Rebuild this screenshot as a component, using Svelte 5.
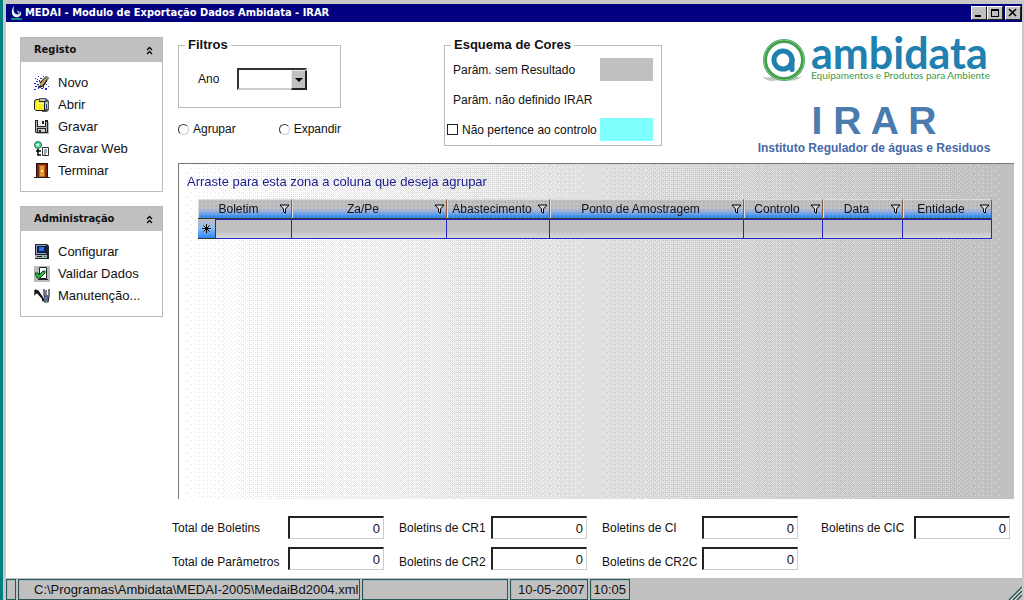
<script>
	import { onMount } from 'svelte';

	let canvas;
	let ano = '';
	let vista = '';
	let foraControlo = false;

	let menus = [
		{
			title: 'Registo',
			open: true,
			items: [
				{ icon: 'novo', label: 'Novo' },
				{ icon: 'abrir', label: 'Abrir' },
				{ icon: 'gravar', label: 'Gravar' },
				{ icon: 'web', label: 'Gravar Web' },
				{ icon: 'terminar', label: 'Terminar' }
			]
		},
		{
			title: 'Administração',
			open: true,
			items: [
				{ icon: 'configurar', label: 'Configurar' },
				{ icon: 'validar', label: 'Validar Dados' },
				{ icon: 'manutencao', label: 'Manutenção...' }
			]
		}
	];

	const columns = [
		{ name: 'Boletim', width: 77 },
		{ name: 'Za/Pe', width: 155 },
		{ name: 'Abastecimento', width: 103 },
		{ name: 'Ponto de Amostragem', width: 194 },
		{ name: 'Controlo', width: 79 },
		{ name: 'Data', width: 80 },
		{ name: 'Entidade', width: 89 }
	];
	const selector = 17;
	const total = columns.reduce((sum, c) => sum + c.width, selector);

	const totals = [
		{ id: 'boletins', label: 'Total de Boletins' },
		{ id: 'cr1', label: 'Boletins de CR1' },
		{ id: 'ci', label: 'Boletins de CI' },
		{ id: 'cic', label: 'Boletins de CIC' },
		{ id: 'parametros', label: 'Total de Parâmetros' },
		{ id: 'cr2', label: 'Boletins de CR2' },
		{ id: 'cr2c', label: 'Boletins de CR2C' }
	];

	// 8x8 ordered dither matrix
	const bayer = (x, y) => {
		let v = 0;
		for (let i = 0; i < 3; i++) {
			const bx = (x >> i) & 1;
			const by = (y >> i) & 1;
			v = v * 4 + ((bx ^ by) * 2 + by);
		}
		return (v + 0.5) / 64;
	};

	function paint() {
		const w = (canvas.width = canvas.clientWidth);
		const h = (canvas.height = canvas.clientHeight);
		if (!w || !h) return;
		const ctx = canvas.getContext('2d');
		const img = ctx.createImageData(w, h);
		const levels = [255, 224, 192];
		for (let y = 0; y < h; y++) {
			for (let x = 0; x < w; x++) {
				const t = (x / w) * 2;
				const base = Math.min(1, Math.floor(t));
				const c = levels[t - base > bayer(x, y) ? base + 1 : base];
				const p = (y * w + x) * 4;
				img.data[p] = img.data[p + 1] = img.data[p + 2] = c;
				img.data[p + 3] = 255;
			}
		}
		ctx.putImageData(img, 0, 0);
	}

	onMount(paint);
</script>

<svelte:window on:resize={paint} />

<div class="window">
	<header class="titlebar">
		<svg class="app-icon" width="14" height="16" viewBox="0 0 14 16">
			<path d="M4 1C1 4 1 11 5 12c4 1 7-1 6-6-1 3-3 4-5 3C4 8 3 5 4 1z" fill="#e4f0f0" />
			<path d="M7 5l3 2-2 2z" fill="#9bc" />
			<path d="M1 14h11" stroke="#0a9080" stroke-width="2" />
		</svg>
		<h1>MEDAI - Modulo de Exportação Dados Ambidata - IRAR</h1>
		<div class="controls">
			<button aria-label="Minimizar"><svg width="10" height="10"><path d="M1 8h6" stroke="#000" stroke-width="2" /></svg></button>
			<button aria-label="Maximizar"><svg width="10" height="10"><path d="M1 1.5h8M1.5 1v8M8.5 1v8M1 8.5h8M1 2.5h8" stroke="#000" /></svg></button>
			<button class="close" aria-label="Fechar"><svg width="10" height="10"><path d="M1 1l7 7M8 1l-7 7" stroke="#000" stroke-width="1.6" /></svg></button>
		</div>
	</header>

	<div class="body">
		<nav>
			{#each menus as menu}
				<section class="menu">
					<button class="menu-head" aria-expanded={menu.open} on:click={() => (menu.open = !menu.open)}>
						{menu.title}
						<svg class:closed={!menu.open} width="7" height="9" viewBox="0 0 7 9">
							<path d="M1 4l2.5-2.5L6 4M1 8l2.5-2.5L6 8" fill="none" stroke="#000" stroke-width="1.3" />
						</svg>
					</button>
					{#if menu.open}
						<ul>
							{#each menu.items as item}
								<li>
									<button class="menu-item">
										<svg width="16" height="16" viewBox="0 0 16 16">
											{#if item.icon === 'novo'}
												<path d="M1 3h1v1H1zM4 1h1v1H4zM6 3h2v1H6zM2 6h2v1H2zM5 5h1v2H5zM0 8h2v1H0zM3 9h2v1H3zM1 11h2v1H1zM4 12h1v2H4zM0 14h2v1H0zM7 13h2v1H7zM9 11h1v2H9zM11 13h2v2h-2zM12 9h1v1h-1zM14 11h1v1h-1zM9 1h1v1H9zM3 4h1v1H3z" fill="#2424d0" />
												<path d="M4 12l2-5 6-6 3 2-5 8-4 2z" fill="#222" />
												<path d="M6 9l5-6 2 1-5 7z" fill="#c8a060" />
												<path d="M11 2l2-1 2 2-1 2-2-1z" fill="#888" />
												<path d="M5 8l2 2-2 1z" fill="#fff" />
											{:else if item.icon === 'abrir'}
												<path d="M5 1h7l3 3v9l-2 2H8z" fill="#555" />
												<path d="M6 2h5v3h3v7H7z" fill="#b8c4d0" />
												<path d="M0 4l2-2h3l1 2h5v10H2l-2-2z" fill="#222" />
												<path d="M1 5l1-2h3v2h5v8H2l-1-1z" fill="#f4ee20" />
												<path d="M3 6h7v1H4v6H3z" fill="#fffba0" />
												<path d="M12 7h1v5h-1z" fill="#234a80" />
											{:else if item.icon === 'gravar'}
												<path d="M3 3h12v12H3z" fill="#bbb" />
												<path d="M1 1h13v13H2l-1-1z" fill="#222" />
												<path d="M2 2h1v11H2zM12 3h1v10h-1zM3 8h9v1H3z" fill="#b4b4b4" />
												<path d="M4 1h7v6H4z" fill="#f0f0f0" />
												<path d="M8 2h2v3H8z" fill="#222" />
												<path d="M4 10h7v3H4z" fill="#ccc" />
												<path d="M5 11h2v2H5z" fill="#222" />
											{:else if item.icon === 'web'}
												<circle cx="4" cy="4" r="3.5" fill="#58d898" stroke="#147050" />
												<path d="M2 3h3v2H3z" fill="#d8fff0" />
												<path d="M4 8v6h3M2 10h5" fill="none" stroke="#000" stroke-width="1.5" />
												<path d="M8.5 6.5h6v8h-6z" fill="#fff" stroke="#333" />
												<path d="M10 9h3M10 11h3M10 13h2" stroke="#357" />
											{:else if item.icon === 'terminar'}
												<path d="M2 0h12v15H2z" fill="#2c0c08" />
												<path d="M3 1h10v13H3z" fill="#7c2810" />
												<path d="M5 2h6v12H5z" fill="#b86818" />
												<path d="M6 3h4v10H6z" fill="#e09838" />
												<path d="M7 7h2v2H7z" fill="#fff490" />
												<path d="M0 14h16v1H0z" fill="#222" />
											{:else if item.icon === 'configurar'}
												<path d="M1 0h12l2 2v13H1z" fill="#1c2430" />
												<path d="M2 1h10v9H2z" fill="#98a4b0" />
												<path d="M3 2h9v7H3z" fill="#0c1c58" />
												<path d="M5 3h5v4H5z" fill="#3070f0" />
												<path d="M1 11h12v3H1z" fill="#aab2b8" />
												<path d="M3 12h5v1H3z" fill="#222" />
												<path d="M10 12h2v1h-2z" fill="#20a040" />
											{:else if item.icon === 'validar'}
												<path d="M0 0h16v16H0z" fill="#bbb" />
												<path d="M5.5 1.5h7v11h-7z" fill="#fff" stroke="#222" />
												<path d="M4 13h10v1H4z" fill="#222" />
												<path d="M1 7h3l1 2 4-4h2v2l-5 5H3z" fill="#30b848" stroke="#0b4818" />
											{:else}
												<path d="M1 2l3 1 6 9M1 2v4l3-3M2 3l7 8" fill="none" stroke="#111" stroke-width="1.4" />
												<path d="M10 1v6l1 3v4h3l1-6V1M12 2v7" fill="none" stroke="#223" stroke-width="1.2" />
												<path d="M12 7h2v6h-2z" fill="#5068a0" />
												<path d="M8 10l3 4-3-1z" fill="#111" />
											{/if}
										</svg>
										{item.label}
									</button>
								</li>
							{/each}
						</ul>
					{/if}
				</section>
			{/each}
		</nav>

		<main>
			<div class="top">
				<div class="filters">
					<fieldset>
						<legend>Filtros</legend>
						<div class="year">
							<label for="ano">Ano</label>
							<div class="select">
								<select id="ano" bind:value={ano}>
									<option value=""></option>
									<option>2004</option>
									<option>2005</option>
								</select>
								<span class="arrow"></span>
							</div>
						</div>
					</fieldset>
					<div class="radios">
						<label><input type="radio" value="agrupar" bind:group={vista} />Agrupar</label>
						<label><input type="radio" value="expandir" bind:group={vista} />Expandir</label>
					</div>
				</div>

				<fieldset class="scheme">
					<legend>Esquema de Cores</legend>
					<div class="scheme-row">
						<span>Parâm. sem Resultado</span>
						<i class="swatch grey"></i>
					</div>
					<div class="scheme-row">
						<span>Parâm. não definido IRAR</span>
						<i class="swatch"></i>
					</div>
					<div class="scheme-row check">
						<label><input type="checkbox" bind:checked={foraControlo} />Não pertence ao controlo</label>
						<i class="swatch cyan"></i>
					</div>
				</fieldset>

				<div class="brands">
					<div class="ambidata">
						<svg width="46" height="48" viewBox="0 0 46 48">
							<path d="M1 38c5 5 12 1 17 0s11 5 24 1c-6 7-15 4-21 4S8 47 1 38z" fill="#c4c8c4" />
							<circle cx="24" cy="23" r="19" fill="#fff" stroke="#3fa24a" stroke-width="4" />
							<circle cx="24" cy="23" r="20" fill="none" stroke="#83c488" stroke-width="1" />
							<circle cx="23" cy="23" r="9" fill="none" stroke="#2080b0" stroke-width="5" />
							<path d="M32 22v10.500" fill="none" stroke="#2080b0" stroke-width="5" stroke-linecap="round" />
						</svg>
						<div>
							<div class="word">ambidata</div>
							<div class="slogan">Equipamentos e Produtos para Ambiente</div>
						</div>
					</div>
					<div class="irar">I R A R</div>
					<div class="institute">Instituto Regulador de águas e Residuos</div>
				</div>
			</div>

			<div class="grid-panel">
				<canvas bind:this={canvas}></canvas>
				<p>Arraste para esta zona a coluna que deseja agrupar</p>
				<table>
					<colgroup>
						<col style="width: {(selector / total) * 100}%" />
						{#each columns as col}
							<col style="width: {(col.width / total) * 100}%" />
						{/each}
					</colgroup>
					<thead>
						<tr>
							{#each columns as col, i}
								<th colspan={i === 0 ? 2 : 1}>
									<div>
										<span>{col.name}</span>
										<button aria-label="Filtrar {col.name}">
											<svg width="11" height="10" viewBox="0 0 11 10">
												<path d="M1 1h9L6.5 5v4l-2-1V5z" fill="#d8d8e0" stroke="#000" />
											</svg>
										</button>
									</div>
								</th>
							{/each}
						</tr>
					</thead>
					<tbody>
						<tr>
							<th scope="row" class="new-row">
								<svg width="9" height="9" viewBox="0 0 9 9">
									<path d="M4.5 0v9M0 4.5h9M1.5 1.5l6 6M7.5 1.5l-6 6" stroke="#000" />
								</svg>
							</th>
							{#each columns as col}
								<td></td>
							{/each}
						</tr>
					</tbody>
				</table>
			</div>

			<div class="totals">
				{#each totals as t, i}
					<label for={t.id} class:low={i > 3}>{t.label}</label>
					<input id={t.id} type="text" value="0" readonly />
				{/each}
			</div>
		</main>
	</div>

	<footer>
		<span class="cell mark"></span>
		<span class="cell path">C:\Programas\Ambidata\MEDAI-2005\MedaiBd2004.xml</span>
		<span class="cell blank"></span>
		<span class="cell">10-05-2007</span>
		<span class="cell">10:05</span>
		<svg class="grip" width="14" height="14" viewBox="0 0 14 14">
			<path d="M1 14L14 1M5 14l9-9M9 14l5-5" stroke="#2c5c5c" stroke-width="1.5" />
			<path d="M3 14L14 3M7 14l7-7" stroke="#eee" />
		</svg>
	</footer>
</div>

<style>
	:global(body) {
		background: #fff;
	}

	.window {
		box-sizing: border-box;
		min-height: 100vh;
		display: flex;
		flex-direction: column;
		border-left: 3px solid #008080;
		font: 12px/16px 'Liberation Sans', Arial, sans-serif;
		color: #111;
		box-shadow: inset 3px 0 #c8c8c8, inset -2px 0 #c8c8c8;
		padding: 0 2px 0 3px;
	}

	button,
	input,
	select {
		font: inherit;
		color: inherit;
	}

	button {
		border: 0;
		padding: 0;
		background: none;
	}

	svg {
		flex: none;
		display: block;
	}

	.titlebar {
		display: flex;
		align-items: center;
		height: 18px;
		padding: 0 1px 0 4px;
		background: #000080;
		border-top: 4px solid #c8c8c8;
	}

	h1 {
		flex: 1;
		margin: 0 0 0 1px;
		color: #fff;
		font: bold 11px/16px 'DejaVu Sans Condensed', 'DejaVu Sans', sans-serif;
		white-space: nowrap;
	}

	.controls {
		display: flex;
	}

	.controls button {
		box-sizing: border-box;
		display: grid;
		place-items: center;
		width: 16px;
		height: 14px;
		background: #c0c0c0;
		border: 1px solid;
		border-color: #fff #222 #222 #fff;
	}

	.controls .close {
		margin-left: 2px;
	}

	.body {
		flex: 1;
		display: flex;
		gap: 9px;
		padding: 15px 8px 8px 14px;
	}

	nav {
		flex: none;
		width: 143px;
		display: flex;
		flex-direction: column;
		gap: 14px;
	}

	.menu {
		border: 1px solid #bbb;
	}

	.menu-head {
		display: flex;
		align-items: center;
		justify-content: space-between;
		width: 100%;
		height: 24px;
		padding: 0 9px 0 13px;
		background: #c0c0c0;
		font: bold 11px/16px 'DejaVu Sans Condensed', 'DejaVu Sans', sans-serif;
	}

	.closed {
		transform: rotate(180deg);
	}

	ul {
		list-style: none;
		margin: 0;
		padding: 10px 0 9px 13px;
	}

	.menu-item {
		display: flex;
		align-items: center;
		gap: 8px;
		height: 22px;
		font-size: 13px;
	}

	main {
		flex: 1;
		min-width: 0;
		display: flex;
		flex-direction: column;
	}

	.top {
		display: flex;
		height: 126px;
		padding-left: 6px;
	}

	fieldset {
		margin: 0;
		padding: 0;
		border: 1px solid #bbb;
	}

	legend {
		margin-left: 6px;
		padding: 0 3px;
		font-size: 13px;
		font-weight: bold;
	}

	.filters {
		flex: none;
		width: 163px;
		margin-right: 103px;
	}

	.year {
		display: flex;
		align-items: center;
		gap: 18px;
		padding: 15px 0 17px 19px;
	}

	.select {
		position: relative;
		width: 70px;
	}

	select {
		appearance: none;
		display: block;
		box-sizing: border-box;
		width: 100%;
		height: 22px;
		padding: 0 18px 0 4px;
		background: #fff;
		border: 2px solid;
		border-color: #333 #ccc #ccc #333;
		border-radius: 0;
	}

	.arrow {
		position: absolute;
		top: 2px;
		right: 0;
		width: 16px;
		height: 20px;
		box-sizing: border-box;
		display: grid;
		place-items: center;
		background: #c0c0c0;
		border: 1px solid;
		border-width: 1px 2px 2px 1px;
		border-color: #e8e8e8 #222 #222 #e8e8e8;
		pointer-events: none;
	}

	.arrow::after {
		content: '';
		border: 4px solid transparent;
		border-top-color: #000;
		border-bottom: 0;
	}

	.radios {
		display: flex;
		justify-content: space-between;
		margin-top: 13px;
	}

	.radios label,
	.check label {
		display: flex;
		align-items: center;
		gap: 4px;
		white-space: nowrap;
	}

	input[type='radio'],
	input[type='checkbox'] {
		appearance: none;
		box-sizing: border-box;
		flex: none;
		width: 11px;
		height: 11px;
		margin: 0;
		background: #fff;
		border: 1px solid #222;
	}

	input[type='radio'] {
		border-color: #333 #ccc #ccc #333;
		border-radius: 50%;
	}

	input[type='radio']:checked,
	input[type='checkbox']:checked {
		background: radial-gradient(#000 35%, #fff 40%);
	}

	.scheme {
		flex: none;
		align-self: flex-start;
		width: 218px;
		box-sizing: border-box;
	}

	.scheme-row {
		display: flex;
		align-items: center;
		justify-content: space-between;
		height: 23px;
		margin: 5px 8px 7px;
	}

	.scheme-row.check {
		margin: 5px 8px 4px 2px;
	}

	.swatch {
		width: 53px;
		height: 23px;
	}

	.grey {
		background: #c0c0c0;
	}

	.cyan {
		background: #80ffff;
	}

	.brands {
		display: flex;
		flex-direction: column;
		align-items: center;
		margin: 0 26px 0 auto;
		width: 228px;
		white-space: nowrap;
	}

	.ambidata {
		display: flex;
		gap: 5px;
		width: 100%;
	}

	.word {
		color: #2080b0;
		font: bold 43px/32px Lato, sans-serif;
	}

	.slogan {
		color: #3c9c48;
		font: 10px/12px Lato, sans-serif;
	}

	.irar {
		margin-top: 17px;
		color: #4a7cb0;
		font-size: 39px;
		font-weight: bold;
		line-height: 38px;
	}

	.institute {
		color: #4668a8;
		font-weight: bold;
	}

	.grid-panel {
		position: relative;
		flex: 1;
		margin-left: 6px;
		padding: 10px 22px 8px 19px;
		border-top: 1px solid #777;
		border-left: 1px solid #777;
	}

	canvas {
		position: absolute;
		inset: 0;
		width: 100%;
		height: 100%;
	}

	p {
		position: relative;
		margin: 0 0 9px -11px;
		color: #1a1a90;
		font-size: 13px;
	}

	table {
		position: relative;
		width: 100%;
		table-layout: fixed;
		border-collapse: separate;
		border-spacing: 0;
	}

	th,
	td {
		box-sizing: border-box;
		padding: 0;
		font-weight: normal;
	}

	thead th {
		height: 20px;
		border-top: 1px solid #ddd;
		border-right: 1px solid #8a5a40;
		border-bottom: 1px solid #333;
		box-shadow: inset 1px 0 #ddd;
		background:
			radial-gradient(circle, #a4a4b0 20%, transparent 30%) 0 0 / 4px 4px,
			linear-gradient(#c0c0c0 40%, #a8b4dc 60%, #58a0f0 78%, #2080f0);
	}

	thead div {
		display: flex;
		align-items: center;
		padding-right: 1px;
	}

	thead span {
		flex: 1;
		text-align: center;
		white-space: nowrap;
	}

	.new-row {
		height: 20px;
		background: linear-gradient(#c0c0c0, #90b8f0 50%, #2888f8);
		border-bottom: 1px solid #333;
	}

	.new-row svg {
		margin: auto;
	}

	td {
		border-top: 1px solid #2424c8;
		border-right: 1px solid #2424c8;
		border-bottom: 1px solid #2424c8;
		background: linear-gradient(#c0c0c0 60%, #d8d8d8);
	}

	.new-row + td {
		border-left: 1px solid #2424c8;
	}

	.totals {
		display: grid;
		grid-template-columns: 116fr 96fr 107fr 96fr 115fr 96fr 116fr 96fr;
		row-gap: 8px;
		align-items: center;
		margin-top: 17px;
		padding-right: 4px;
	}

	.totals label {
		padding-left: 15px;
		white-space: nowrap;
	}

	.totals label:nth-child(8n + 1) {
		padding-left: 0;
	}

	.totals label:nth-child(8n + 7) {
		padding-left: 23px;
	}

	.totals .low {
		align-self: end;
	}

	.totals input {
		box-sizing: border-box;
		width: 100%;
		height: 23px;
		padding: 0 3px;
		border: 1px solid;
		border-width: 2px 1px 1px 2px;
		border-color: #222 #ccc #ccc #222;
		border-radius: 0;
		background: #fff;
		font-size: 13px;
		text-align: right;
	}

	footer {
		display: flex;
		gap: 2px;
		height: 22px;
		padding-top: 1px;
		box-sizing: border-box;
		background: #c0c0c0;
	}

	.cell {
		box-sizing: border-box;
		padding: 0 2px 0 7px;
		border: 1px solid #285858;
		box-shadow: inset 1px 1px #a0bcbc;
		font-size: 13px;
		line-height: 20px;
		white-space: nowrap;
	}

	.cell:nth-child(5) {
		padding: 0 3px;
	}

	.mark {
		width: 10px;
		padding: 0;
	}

	.path {
		width: 342px;
		padding-left: 15px;
	}

	.blank {
		width: 146px;
	}

	.grip {
		margin: auto 0 0 auto;
	}
</style>
